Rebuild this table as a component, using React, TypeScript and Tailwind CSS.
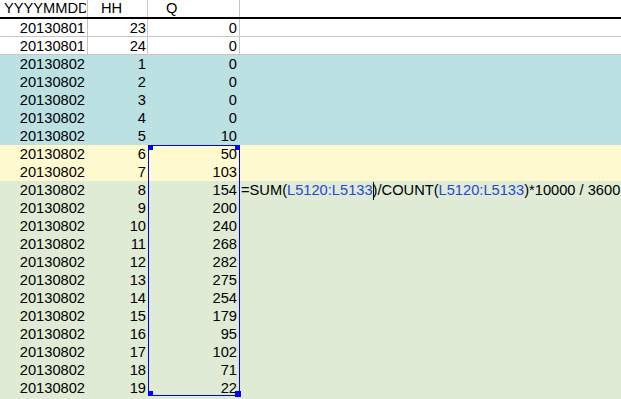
import React from "react";

type Row = { d: string; h: string; q: string; bg: "white" | "teal" | "yellow" | "green"; formula?: boolean };

const rows: Row[] = [
  { d: "20130801", h: "23", q: "0", bg: "white" },
  { d: "20130801", h: "24", q: "0", bg: "white" },
  { d: "20130802", h: "1", q: "0", bg: "teal" },
  { d: "20130802", h: "2", q: "0", bg: "teal" },
  { d: "20130802", h: "3", q: "0", bg: "teal" },
  { d: "20130802", h: "4", q: "0", bg: "teal" },
  { d: "20130802", h: "5", q: "10", bg: "teal" },
  { d: "20130802", h: "6", q: "50", bg: "yellow" },
  { d: "20130802", h: "7", q: "103", bg: "yellow" },
  { d: "20130802", h: "8", q: "154", bg: "green", formula: true },
  { d: "20130802", h: "9", q: "200", bg: "green" },
  { d: "20130802", h: "10", q: "240", bg: "green" },
  { d: "20130802", h: "11", q: "268", bg: "green" },
  { d: "20130802", h: "12", q: "282", bg: "green" },
  { d: "20130802", h: "13", q: "275", bg: "green" },
  { d: "20130802", h: "14", q: "254", bg: "green" },
  { d: "20130802", h: "15", q: "179", bg: "green" },
  { d: "20130802", h: "16", q: "95", bg: "green" },
  { d: "20130802", h: "17", q: "102", bg: "green" },
  { d: "20130802", h: "18", q: "71", bg: "green" },
  { d: "20130802", h: "19", q: "22", bg: "green" },
  { d: "", h: "", q: "", bg: "green" },
];

const bgClass = {
  white: "bg-white",
  teal: "bg-[#bbe1e3]",
  yellow: "bg-[#fff9cf]",
  green: "bg-[#dfebd4]",
};

function Formula() {
  return (
    <span className="whitespace-nowrap">
      =SUM(<span className="text-[#2747d6]">L5120:L5133</span>
      <span className="relative inline-block w-0">
        <span className="absolute left-[0px] top-[-13px] h-[18px] w-px bg-black" />
      </span>
      )/COUNT(<span className="text-[#2747d6]">L5120:L5133</span>)*10000 / 3600
    </span>
  );
}

export default function App() {
  return (
    <div
      className="relative w-[621px] h-[399px] overflow-hidden bg-white text-black text-[14.67px]"
      style={{ fontFamily: '"Liberation Sans", Arial, sans-serif' }}
    >
      {/* header */}
      <div className="flex h-[19px] border-b-2 border-black leading-[17px]">
        <div className="w-[88px] border-r border-[#c6c6c6] overflow-hidden whitespace-nowrap pl-[4px]">
          <div className="w-[82px] overflow-hidden">YYYYMMDD</div>
        </div>
        <div className="w-[60px] border-r border-[#c6c6c6] pl-[13px]">HH</div>
        <div className="w-[92px] border-r border-[#c6c6c6] pl-[18px]">Q</div>
        <div className="flex-1" />
      </div>
      {rows.map((r, i) => {
        const white = r.bg === "white";
        const line = white ? "border-[#c6c6c6]" : "border-transparent";
        return (
          <div key={i} className={`flex h-[18px] leading-[18px] ${bgClass[r.bg]} ${white ? "border-b border-[#c6c6c6]" : ""}`}>
            <div className={`w-[88px] border-r ${line} text-right pr-[2px]`}>{r.d}</div>
            <div className={`w-[60px] border-r ${line} text-right pr-[1px]`}>{r.h}</div>
            <div className={`w-[92px] border-r ${line} text-right pr-[2px]`}>{r.q}</div>
            <div className="flex-1 pl-[1px] overflow-visible">{r.formula ? <Formula /> : null}</div>
          </div>
        );
      })}
      {/* selection */}
      <div className="absolute left-[148px] top-[145px] w-[92px] h-[251px] border border-[#0000ff] pointer-events-none">
        <div className="absolute -left-px -top-px w-[5px] h-[5px] bg-[#0000ff]" />
        <div className="absolute -right-px -top-px w-[5px] h-[5px] bg-[#0000ff]" />
        <div className="absolute -left-px -bottom-px w-[5px] h-[5px] bg-[#0000ff]" />
        <div className="absolute -right-[2px] -bottom-[2px] w-[6px] h-[6px] bg-[#0000ff]" />
      </div>
    </div>
  );
}
